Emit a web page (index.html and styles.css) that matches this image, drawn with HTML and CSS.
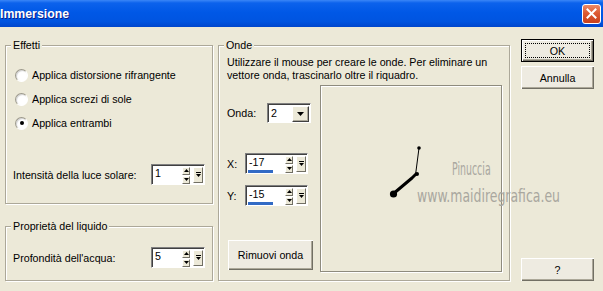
FILE: index.html
```html
<!DOCTYPE html>
<html lang="it">
<head>
    <meta charset="UTF-8">
    <title>Immersione</title>
    <link rel="stylesheet" href="styles.css">
</head>
<body>
    <div class="titlebar">
        <span class="title">Immersione</span>
        <span class="close-btn">
            <svg width="11" height="11" viewBox="0 0 11 11"><path d="M1.5 1.5 L9.5 9.5 M9.5 1.5 L1.5 9.5" stroke="#fff" stroke-width="2" stroke-linecap="square"/></svg>
        </span>
    </div>

    <div class="dialog">
        <div class="col-left">
            <div class="group group-effects">
                <span class="group-title">Effetti</span>
                <div class="radio-list">
                    <div class="radio"><span class="radio-dot"></span>Applica distorsione rifrangente</div>
                    <div class="radio"><span class="radio-dot"></span>Applica screzi di sole</div>
                    <div class="radio"><span class="radio-dot checked"></span>Applica entrambi</div>
                </div>
                <div class="field-row intensity-row">
                    <span>Intensità della luce solare:</span>
                    <div class="spin">
                        <div class="spin-field"><span class="spin-value">1</span></div>
                        <div class="spin-arrows">
                            <span class="arrow-btn"><svg width="5" height="3" viewBox="0 0 5 3"><path d="M0 3 L2.5 0 L5 3 Z"/></svg></span>
                            <span class="arrow-btn"><svg width="5" height="3" viewBox="0 0 5 3"><path d="M0 0 L5 0 L2.5 3 Z"/></svg></span>
                        </div>
                        <span class="menu-btn"><svg width="5" height="6" viewBox="0 0 5 6"><rect width="5" height="1"/><path d="M0 2 L5 2 L2.5 5 Z"/></svg></span>
                    </div>
                </div>
            </div>

            <div class="group group-liquid">
                <span class="group-title">Proprietà del liquido</span>
                <div class="field-row depth-row">
                    <span>Profondità dell'acqua:</span>
                    <div class="spin">
                        <div class="spin-field"><span class="spin-value">5</span></div>
                        <div class="spin-arrows">
                            <span class="arrow-btn"><svg width="5" height="3" viewBox="0 0 5 3"><path d="M0 3 L2.5 0 L5 3 Z"/></svg></span>
                            <span class="arrow-btn"><svg width="5" height="3" viewBox="0 0 5 3"><path d="M0 0 L5 0 L2.5 3 Z"/></svg></span>
                        </div>
                        <span class="menu-btn"><svg width="5" height="6" viewBox="0 0 5 6"><rect width="5" height="1"/><path d="M0 2 L5 2 L2.5 5 Z"/></svg></span>
                    </div>
                </div>
            </div>
        </div>

        <div class="group group-waves">
            <span class="group-title">Onde</span>
            <p class="hint">Utilizzare il mouse per creare le onde. Per eliminare un<br>vettore onda, trascinarlo oltre il riquadro.</p>
            <div class="wave-body">
                <div class="wave-controls">
                    <div class="wave-row onda-row">
                        <span class="row-label onda-label">Onda:</span>
                        <div class="combo">
                            <span class="spin-value">2</span>
                            <span class="combo-btn"><svg width="7" height="4" viewBox="0 0 7 4"><path d="M0 0 L7 0 L3.5 4 Z"/></svg></span>
                        </div>
                    </div>
                    <div class="wave-row x-row">
                        <span class="row-label">X:</span>
                        <div class="spin spin-wide">
                            <div class="spin-field"><span class="spin-value">-17</span><span class="value-bar"></span></div>
                            <div class="spin-arrows">
                                <span class="arrow-btn"><svg width="5" height="3" viewBox="0 0 5 3"><path d="M0 3 L2.5 0 L5 3 Z"/></svg></span>
                                <span class="arrow-btn"><svg width="5" height="3" viewBox="0 0 5 3"><path d="M0 0 L5 0 L2.5 3 Z"/></svg></span>
                            </div>
                            <span class="menu-btn"><svg width="5" height="6" viewBox="0 0 5 6"><rect width="5" height="1"/><path d="M0 2 L5 2 L2.5 5 Z"/></svg></span>
                        </div>
                    </div>
                    <div class="wave-row y-row">
                        <span class="row-label">Y:</span>
                        <div class="spin spin-wide">
                            <div class="spin-field"><span class="spin-value">-15</span><span class="value-bar"></span></div>
                            <div class="spin-arrows">
                                <span class="arrow-btn"><svg width="5" height="3" viewBox="0 0 5 3"><path d="M0 3 L2.5 0 L5 3 Z"/></svg></span>
                                <span class="arrow-btn"><svg width="5" height="3" viewBox="0 0 5 3"><path d="M0 0 L5 0 L2.5 3 Z"/></svg></span>
                            </div>
                            <span class="menu-btn"><svg width="5" height="6" viewBox="0 0 5 6"><rect width="5" height="1"/><path d="M0 2 L5 2 L2.5 5 Z"/></svg></span>
                        </div>
                    </div>
                    <button class="btn btn-remove">Rimuovi onda</button>
                </div>
                <div class="preview">
                    <svg width="180" height="185" viewBox="0 0 180 185">
                        <line x1="98" y1="62" x2="94.5" y2="89" stroke="#000" stroke-width="1"/>
                        <path d="M95 88 L91 92 L72 108" fill="none" stroke="#000" stroke-width="3" stroke-linecap="round" stroke-linejoin="round"/>
                        <circle cx="98" cy="62" r="1.8"/>
                        <circle cx="96" cy="88" r="2"/>
                        <circle cx="72.5" cy="108" r="3.6"/>
                    </svg>
                </div>
            </div>
        </div>

        <div class="col-buttons">
            <button class="btn btn-default"><span class="focus-rect">OK</span></button>
            <button class="btn btn-cancel">Annulla</button>
            <button class="btn btn-help">?</button>
        </div>
    </div>

    <!-- filigrana sopra l'anteprima -->
    <div class="watermark">
        <span class="wm-name">Pinuccia</span>
        <span class="wm-site">www.maidiregrafica.eu</span>
    </div>
</body>
</html>
```

FILE: styles.css
```css
body {
    margin: 0;
    width: 603px;
    height: 291px;
    overflow: hidden;
    position: relative;
    background-color: #ECE9D8;
    color: #000;
    font-family: "Liberation Sans", Arial, sans-serif;
    font-size: 10.7px;
}
.titlebar {
    height: 27px;
    display: flex;
    align-items: center;
    justify-content: space-between;
    padding-right: 2px;
    background: linear-gradient(to bottom, #3A86F7 0, #0C62EC 3px, #0058E6 45%, #0054E0 80%, #0046CC 100%);
}
.title {
    color: white;
    font-weight: bold;
    font-size: 12.3px;
    text-shadow: 1px 1px 0 #0A1E8C;
}
.close-btn {
    width: 19px;
    height: 20px;
    box-sizing: border-box;
    border: 1px solid #fff;
    border-radius: 3px;
    background: linear-gradient(to bottom, #EB8A68, #DC5A33 45%, #C8401B);
    display: flex;
    align-items: center;
    justify-content: center;
}
.close-btn svg {
    display: block;
}
.dialog {
    display: flex;
    padding: 12px 0 0 5px;
}
.col-left {
    width: 208px;
    display: flex;
    flex-direction: column;
}
.group {
    box-sizing: border-box;
    border: 1px solid #ACA899;
    box-shadow: inset 1px 1px 0 #fff, 1px 1px 0 #fff;
    display: flex;
    flex-direction: column;
}
.group-title {
    align-self: flex-start;
    margin: -7px 0 0 5px;
    padding: 0 2px;
    line-height: 13px;
    background-color: #ECE9D8;
}
.group-effects {
    margin-top: 6px;
    height: 159px;
}
.group-liquid {
    margin-top: 22px;
    height: 55px;
}
.group-waves {
    margin: 6px 0 0 5px;
    width: 292px;
    height: 236px;
}
.radio-list {
    margin-top: 11px;
    padding-left: 9px;
    display: flex;
    flex-direction: column;
}
.radio {
    height: 24px;
    display: flex;
    align-items: center;
    gap: 4px;
}
.radio-dot {
    width: 13px;
    height: 13px;
    box-sizing: border-box;
    border-radius: 50%;
    border: 1px solid;
    border-color: #9C998B #fff #fff #9C998B;
    background-color: #fff;
    box-shadow: inset 1px 1px 1px rgba(0, 0, 0, 0.18);
    display: flex;
    align-items: center;
    justify-content: center;
}
.radio-dot.checked::after {
    content: "";
    width: 4px;
    height: 4px;
    border-radius: 50%;
    background-color: #000;
}
.field-row {
    display: flex;
    align-items: center;
    justify-content: space-between;
    padding: 0 7px;
}
.intensity-row {
    margin-top: 29px;
}
.depth-row {
    margin-top: 14px;
}
.spin {
    width: 54px;
    height: 21px;
    box-sizing: border-box;
    border: 1px solid;
    border-color: #808080 #fff #fff #808080;
    box-shadow: inset 1px 1px 0 #404040;
    background-color: #fff;
    display: flex;
    align-items: center;
    padding: 1px 1px 0 1px;
}
.spin-wide {
    width: 63px;
}
.spin-field {
    flex: 1;
    align-self: stretch;
    display: flex;
    flex-direction: column;
    justify-content: space-between;
    padding-left: 2px;
}
.spin-value {
    line-height: 15px;
}
.value-bar {
    width: 25px;
    height: 3px;
    margin-left: -1px;
    background-color: #316AC5;
}
.spin-arrows {
    display: flex;
    flex-direction: column;
    gap: 1px;
    margin-right: 3px;
}
.arrow-btn,
.menu-btn,
.combo-btn {
    box-sizing: border-box;
    display: flex;
    align-items: center;
    justify-content: center;
    background-color: #ECE9D8;
    border: 1px solid;
    border-color: #fff #716F64 #716F64 #fff;
}
.arrow-btn {
    width: 8px;
    height: 8px;
}
.menu-btn {
    width: 10px;
    height: 16px;
}
.arrow-btn svg,
.menu-btn svg,
.combo-btn svg {
    display: block;
}
.hint {
    margin: 4px 0 0 8px;
    line-height: 13px;
}
.wave-body {
    margin-top: 3px;
    padding-left: 8px;
    display: flex;
    gap: 7px;
}
.wave-controls {
    width: 86px;
    display: flex;
    flex-direction: column;
}
.wave-row {
    display: flex;
    align-items: center;
}
.row-label {
    width: 18px;
}
.onda-label {
    width: 40px;
}
.onda-row {
    margin-top: 18px;
}
.x-row {
    margin-top: 30px;
}
.y-row {
    margin-top: 11px;
}
.combo {
    width: 44px;
    height: 20px;
    box-sizing: border-box;
    border: 1px solid;
    border-color: #808080 #fff #fff #808080;
    box-shadow: inset 1px 1px 0 #404040;
    background-color: #fff;
    display: flex;
    align-items: center;
    justify-content: space-between;
    padding: 1px 1px 0 3px;
}
.combo-btn {
    width: 17px;
    height: 16px;
    border-color: #fff #404040 #404040 #fff;
    box-shadow: inset -1px -1px 0 #ACA899;
}
.preview {
    width: 182px;
    height: 187px;
    box-sizing: border-box;
    border: 1px solid #8E8B7E;
    box-shadow: 1px 1px 0 #fff, inset 1px 1px 0 #fff;
}
.preview svg {
    display: block;
}
.btn {
    font-family: inherit;
    font-size: inherit;
    color: #000;
    background-color: #EEEBE1;
    border: none;
    padding: 0;
    box-shadow: inset 1px 1px 0 #fff, inset -1px -1px 0 #716F64, inset -2px -2px 0 #ACA899;
}
.btn-remove {
    margin: 34px 0 0 1px;
    width: 85px;
    height: 30px;
}
.col-buttons {
    margin-left: 11px;
    width: 73px;
    display: flex;
    flex-direction: column;
}
.col-buttons .btn {
    height: 23px;
}
.btn-default {
    border: 1px solid #000;
    box-shadow: inset 1px 1px 0 #fff, inset -1px -1px 0 #716F64, inset -2px -2px 0 #ACA899;
    padding: 3px;
}
.focus-rect {
    display: flex;
    align-items: center;
    justify-content: center;
    height: 100%;
    box-sizing: border-box;
    border: 1px dotted #000;
}
.btn-cancel {
    margin-top: 4px;
}
.btn-help {
    margin-top: auto;
}
.watermark {
    position: absolute;
    left: 417px;
    top: 159px;
    display: flex;
    flex-direction: column;
    align-items: flex-start;
    color: #A9A79F;
    font-family: "DejaVu Sans Condensed", "Liberation Sans", sans-serif;
    font-size: 18px;
    line-height: 20px;
}
.wm-name {
    margin-left: 35px;
    transform: scaleX(0.58);
    transform-origin: left center;
}
.wm-site {
    margin-top: 7px;
    transform: scaleX(0.77);
    transform-origin: left center;
}
```
